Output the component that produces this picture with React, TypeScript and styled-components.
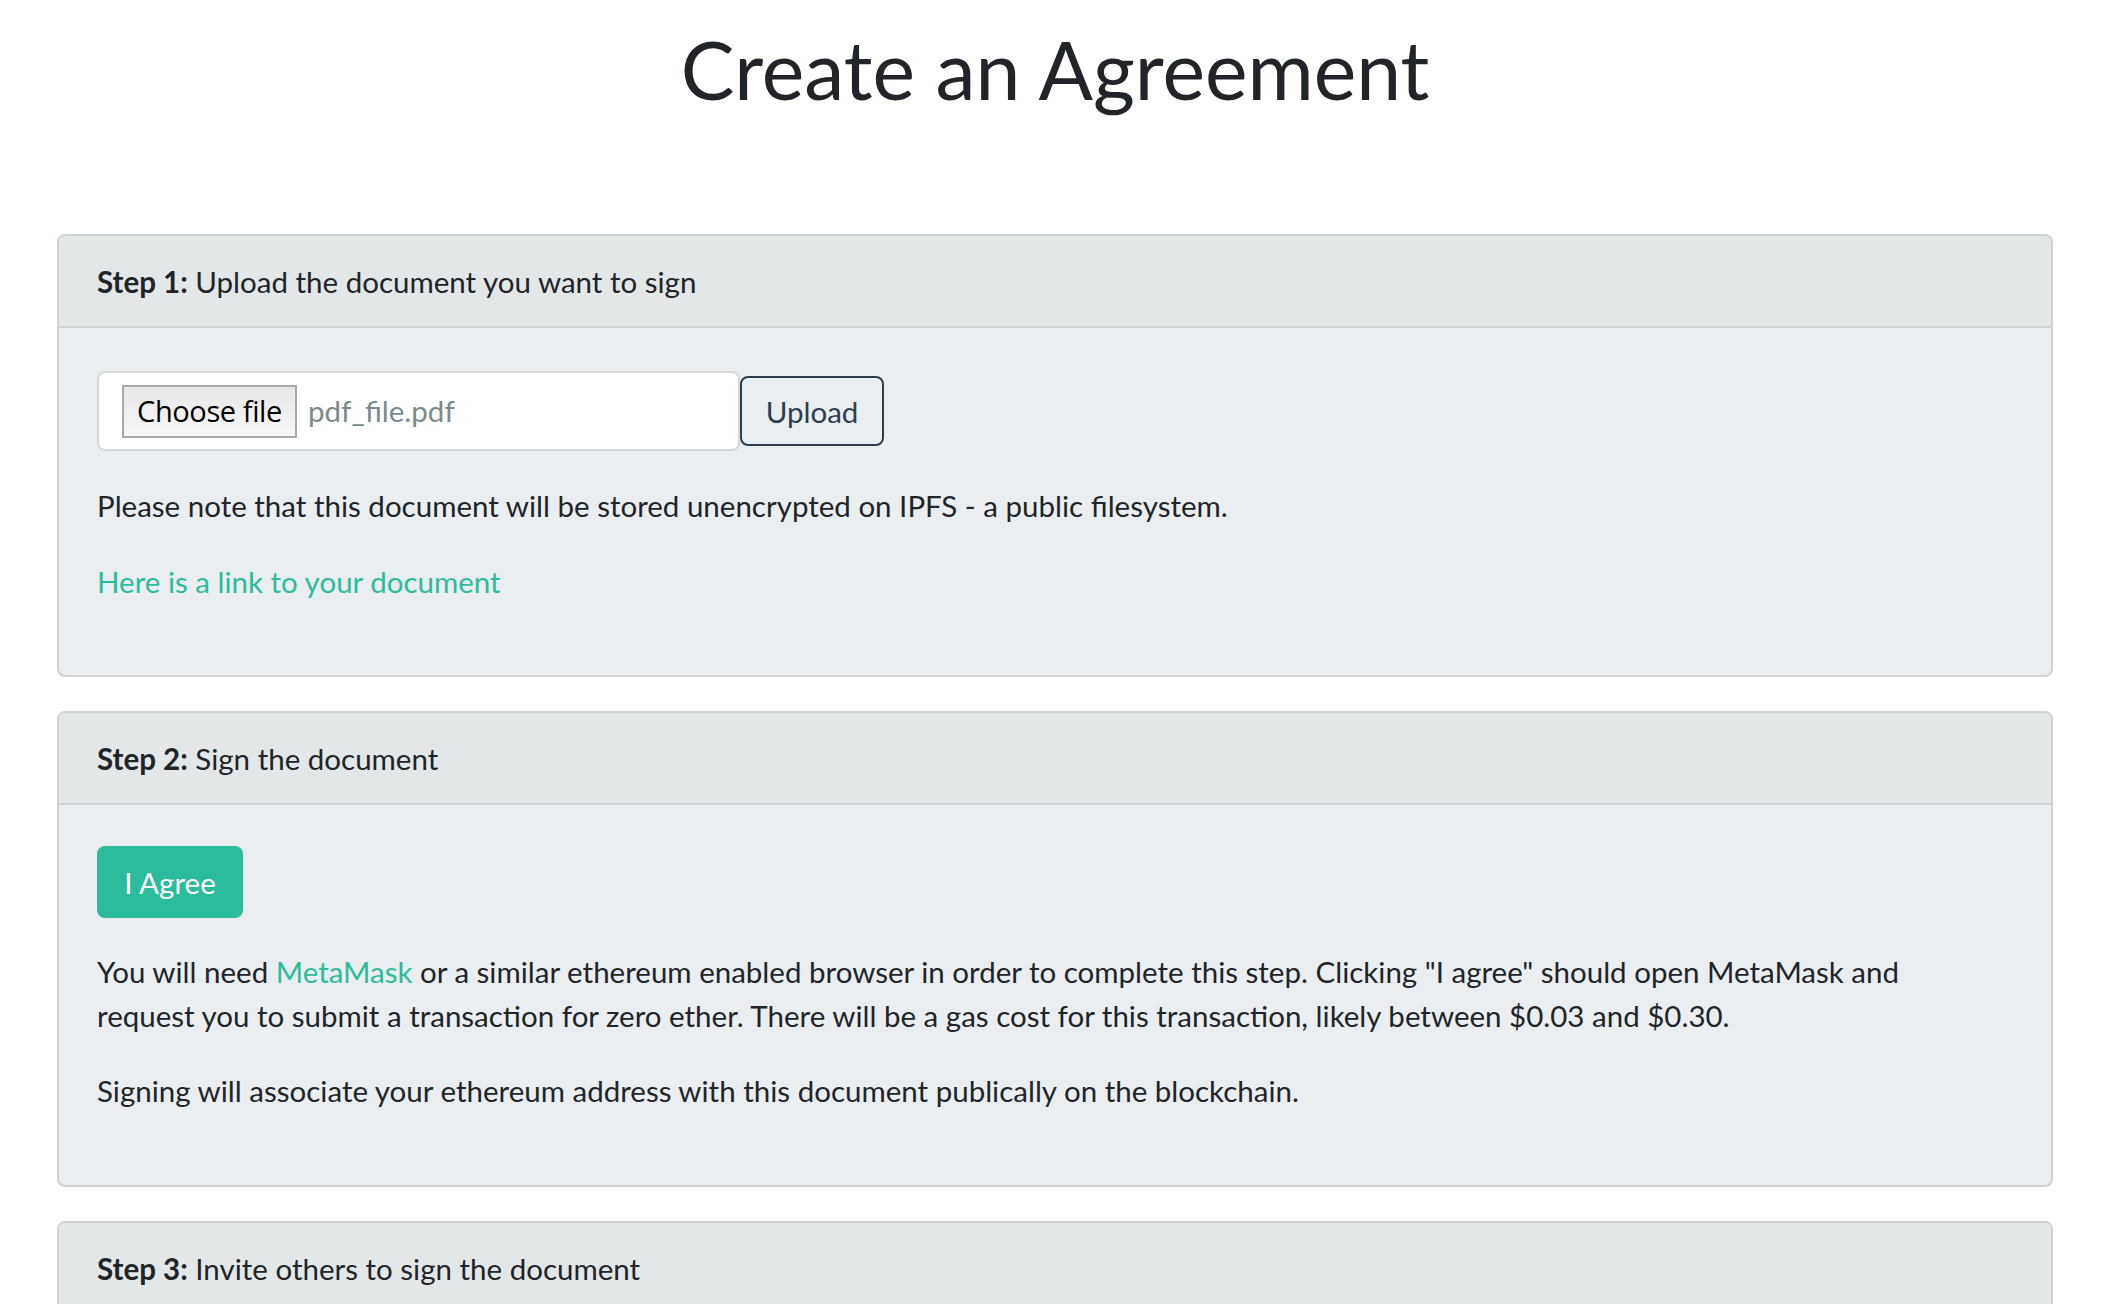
import React from "react";
import styled, { createGlobalStyle } from "styled-components";

const GlobalStyle = createGlobalStyle`
  html, body {
    margin: 0;
    padding: 0;
    background: #ffffff;
  }
  body {
    font-family: Lato, "Open Sans", "Liberation Sans", sans-serif;
    color: #212529;
    -webkit-font-smoothing: antialiased;
  }
  * { box-sizing: border-box; }
`;

const Page = styled.main`
  padding: 21px 55px 40px 57px;
`;

const Title = styled.h1`
  margin: 0 0 117px;
  font-family: Lato, sans-serif;
  font-weight: 400;
  font-size: 80.5px;
  line-height: 96px;
  text-align: center;
  color: #212529;
`;

const Steps = styled.div`
  display: flex;
  flex-direction: column;
  gap: 34px;
`;

const Card = styled.section`
  border: 2px solid #cfd3d5;
  border-radius: 8px;
  background: #ebeef0;
  overflow: hidden;
`;

const CardHeader = styled.header`
  padding: 24px 38px 22px;
  background: #e3e7e8;
  border-bottom: 2px solid #cfd3d5;
  font-size: 29.5px;
  line-height: 44px;
  color: #212529;
`;

const StepLabel = styled.strong`
  font-weight: 700;
`;

const CardBody = styled.div`
  padding: 40px 38px;
  font-size: 29.5px;
  line-height: 43.5px;
`;

const Paragraph = styled.p`
  margin: 0 0 32px;
`;

const Link = styled.a`
  color: #2bbc9b;
  text-decoration: none;
`;

const UploadRow = styled.div`
  display: flex;
  align-items: center;
  margin: 3px 0 33px;
`;

const FileBox = styled.label`
  display: flex;
  align-items: center;
  gap: 11px;
  width: 643px;
  height: 80px;
  padding: 0 23px;
  background: #ffffff;
  border: 2px solid #d5d9dc;
  border-radius: 8px;
`;

const ChooseButton = styled.span`
  display: inline-flex;
  align-items: center;
  justify-content: center;
  width: 175px;
  height: 53px;
  border: 2px solid #a9a9a9;
  background: linear-gradient(#e8e8e8, #f6f6f6);
  font-family: "Open Sans", "Noto Sans", sans-serif;
  font-size: 29px;
  color: #000000;
  letter-spacing: -0.4px;
`;

const FileName = styled.span`
  font-size: 29.5px;
  color: #7b8a8b;
`;

const OutlineButton = styled.button`
  height: 70px;
  width: 144px;
  padding: 0;
  background: transparent;
  border: 2px solid #2c3e50;
  border-radius: 8px;
  font-family: Lato, sans-serif;
  font-size: 29.5px;
  color: #2c3e50;
`;

const SuccessButton = styled.button`
  display: block;
  height: 72px;
  width: 146px;
  padding: 0;
  margin: 1px 0 32px;
  background: #2bbc9b;
  border: none;
  border-radius: 8px;
  font-family: Lato, sans-serif;
  font-size: 29.5px;
  color: #ffffff;
`;

const EmailInput = styled.input`
  display: block;
  width: 100%;
  height: 80px;
  padding: 0 24px;
  margin: 0 0 32px;
  border: 2px solid #d5d9dc;
  border-radius: 8px;
  font-family: Lato, sans-serif;
  font-size: 29.5px;
  color: #212529;
`;

export default function App() {
  return (
    <>
      <GlobalStyle />
      <Page>
        <Title>Create an Agreement</Title>
        <Steps>
          <Card>
            <CardHeader>
              <StepLabel>Step 1:</StepLabel> Upload the document you want to sign
            </CardHeader>
            <CardBody>
              <UploadRow>
                <FileBox>
                  <ChooseButton>Choose file</ChooseButton>
                  <FileName>pdf_file.pdf</FileName>
                </FileBox>
                <OutlineButton>Upload</OutlineButton>
              </UploadRow>
              <Paragraph>
                Please note that this document will be stored unencrypted on IPFS - a public filesystem.
              </Paragraph>
              <Paragraph>
                <Link href="#">Here is a link to your document</Link>
              </Paragraph>
            </CardBody>
          </Card>

          <Card>
            <CardHeader>
              <StepLabel>Step 2:</StepLabel> Sign the document
            </CardHeader>
            <CardBody>
              <SuccessButton>I Agree</SuccessButton>
              <Paragraph>
                You will need <Link href="#">MetaMask</Link> or a similar ethereum enabled browser in order to
                complete this step. Clicking "I agree" should open MetaMask and
                <br />
                request you to submit a transaction for zero ether. There will be a gas cost for this
                transaction, likely between $0.03 and $0.30.
              </Paragraph>
              <Paragraph>
                Signing will associate your ethereum address with this document publically on the blockchain.
              </Paragraph>
            </CardBody>
          </Card>

          <Card>
            <CardHeader>
              <StepLabel>Step 3:</StepLabel> Invite others to sign the document
            </CardHeader>
            <CardBody>
              <EmailInput placeholder="Email address" />
              <Paragraph>Send them the link to this document so they can sign it too.</Paragraph>
            </CardBody>
          </Card>
        </Steps>
      </Page>
    </>
  );
}
